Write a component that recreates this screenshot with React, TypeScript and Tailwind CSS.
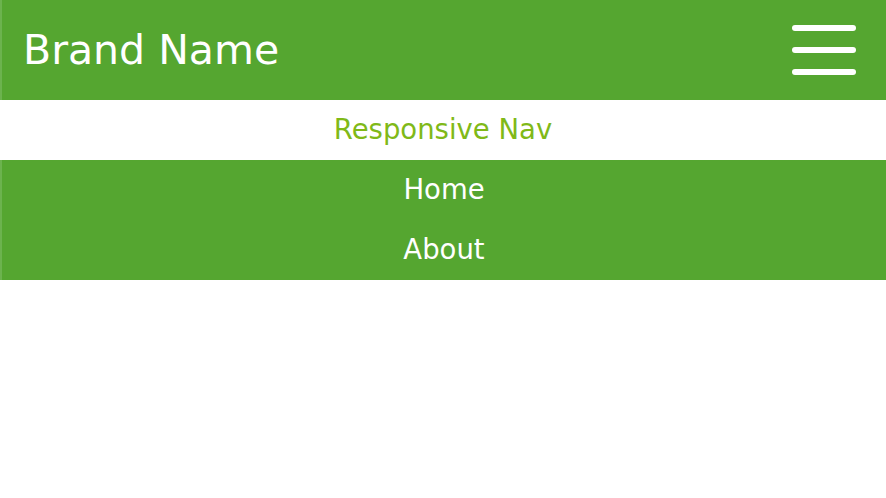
export default function App() {
  return (
    <div className="min-h-[498px] bg-white font-['DejaVu_Sans',sans-serif]">
      <header className="flex h-[100px] items-center justify-between border-l-2 border-[#6cb34e] bg-[#55a630] pl-[21px] pr-[30px]">
        <h1 className="text-[41px] leading-none text-white">Brand Name</h1>
        <button className="flex w-[64px] flex-col gap-[16px]" aria-label="Menu">
          <span className="block h-[6px] w-full rounded-full bg-white" />
          <span className="block h-[6px] w-full rounded-full bg-white" />
          <span className="block h-[6px] w-full rounded-full bg-white" />
        </button>
      </header>
      <nav className="text-center text-[27.5px]">
        <div className="flex h-[60px] items-center justify-center text-[#80b918]">Responsive Nav</div>
        <ul className="border-l-2 border-[#6cb34e] bg-[#55a630] text-white">
          <li className="flex h-[60px] items-center justify-center">Home</li>
          <li className="flex h-[60px] items-center justify-center">About</li>
        </ul>
      </nav>
    </div>
  );
}
